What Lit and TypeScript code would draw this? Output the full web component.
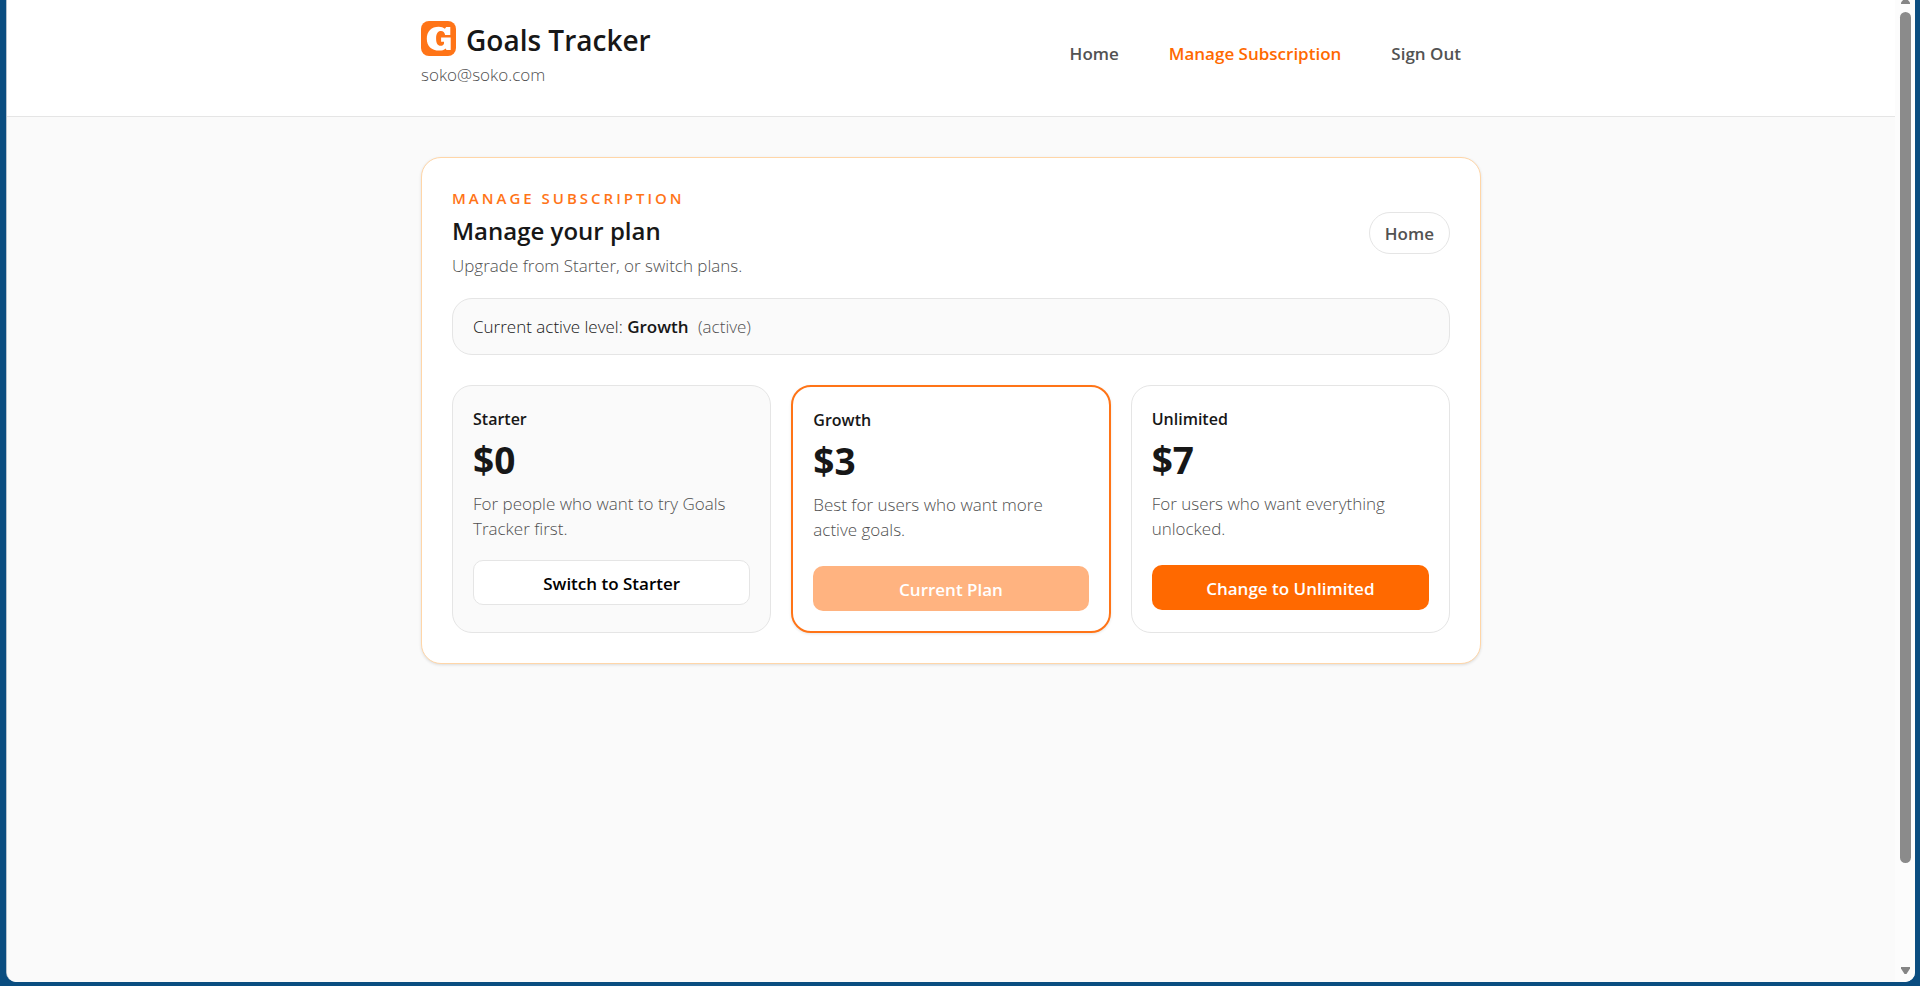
import { LitElement, html, css, svg } from "lit";
import { customElement, property } from "lit/decorators.js";
import { classMap } from "lit/directives/class-map.js";

type Tone = "muted" | "current" | "plain";

interface Plan {
  name: string;
  price: string;
  blurb: string;
  action: string;
  tone: Tone;
}

const plans: Plan[] = [
  {
    name: "Starter",
    price: "$0",
    blurb: "For people who want to try Goals Tracker first.",
    action: "Switch to Starter",
    tone: "muted",
  },
  {
    name: "Growth",
    price: "$3",
    blurb: "Best for users who want more active goals.",
    action: "Current Plan",
    tone: "current",
  },
  {
    name: "Unlimited",
    price: "$7",
    blurb: "For users who want everything unlocked.",
    action: "Change to Unlimited",
    tone: "plain",
  },
];

const logo = svg`
  <svg class="logo" viewBox="0 0 35 35" aria-hidden="true">
    <rect width="35" height="35" rx="8" fill="#ff7417" />
    <path
      fill="#fff"
      d="M29.300 6v8h-5.200c-.5-2.600-1.900-3.900-4.100-3.900-3.200 0-4.900 2.600-4.900 7.400 0 4.900 1.600 7.300 4.500 7.300
         1.800 0 3-.8 3.400-2.400v-1.700h-2.900v-4.200h9.600v12.400h-4.200l-.9-1.500c-1.600 1.500-3.700 2.200-6.300 2.200
         C10.500 29.600 5.800 25 5.800 17.700 5.800 10.400 10.500 5.700 17.700 5.700c2.600 0 4.700.7 6.200 2.100L25.200 6z"
    />
  </svg>
`;

@customElement("plan-card")
export class PlanCard extends LitElement {
  @property({ attribute: false }) plan!: Plan;

  static styles = css`
    :host {
      display: flex;
    }
    .card {
      box-sizing: border-box;
      flex: 1;
      padding: 20px;
      border: 1px solid #e5e5e5;
      border-radius: 20px;
      background: #fff;
      color: #171717;
    }
    .card.muted {
      background: #fafafa;
    }
    .card.current {
      border: 2px solid #ff7417;
      box-shadow: 0 1px 3px rgba(0, 0, 0, 0.1);
    }
    .name {
      margin: 0;
      font-size: 16px;
      line-height: 26px;
      font-weight: 600;
    }
    .price {
      margin: 5px 0 8px;
      font-size: 37px;
      line-height: 46px;
      font-weight: 700;
    }
    .blurb {
      margin: 0;
      font-size: 17px;
      line-height: 25px;
      font-weight: 300;
      color: #505050;
    }
    .action {
      box-sizing: border-box;
      display: block;
      width: 100%;
      height: 45px;
      margin-top: 24px;
      padding: 2px 16px 0;
      border: 0;
      border-radius: 10px;
      background: #ff6900;
      color: #fff;
      font: inherit;
      font-size: 17px;
      font-weight: 600;
    }
    .muted .action {
      margin-top: 19px;
      border: 1px solid #e5e5e5;
      background: #fff;
      color: #000;
    }
    .current .action {
      background: #ffb380;
    }
  `;

  render() {
    const { name, price, blurb, action, tone } = this.plan;
    return html`
      <article class=${classMap({ card: true, [tone]: true })}>
        <h2 class="name">${name}</h2>
        <p class="price">${price}</p>
        <p class="blurb">${blurb}</p>
        <button class="action" type="button" ?disabled=${tone === "current"}>${action}</button>
      </article>
    `;
  }
}

@customElement("app-root")
export class AppRoot extends LitElement {
  static styles = css`
    :host {
      box-sizing: border-box;
      display: flex;
      min-height: 100vh;
      padding: 0 5px 4px 6px;
      background: #0a4d80;
      color: #171717;
      font-family: "Open Sans", "Noto Sans", sans-serif;
      font-size: 17px;
      line-height: 25px;
    }
    .window {
      flex: 1;
      display: flex;
      overflow: hidden;
      border-left: 1px solid #b5c2cf;
      border-radius: 0 0 10px 10px;
      background: #fff;
    }
    .page {
      flex: 1;
      background: #fafafa;
    }
    .header {
      border-bottom: 1px solid #e5e5e5;
      background: #fff;
    }
    .inner {
      box-sizing: border-box;
      max-width: 1060px;
      margin: 0 auto;
    }
    .bar {
      display: flex;
      align-items: center;
      justify-content: space-between;
      padding: 20px 0 29px;
    }
    .brand {
      display: flex;
      align-items: center;
      gap: 10px;
      height: 40px;
    }
    .logo {
      width: 35px;
      height: 35px;
      margin-bottom: 4px;
    }
    .title {
      margin: 0;
      font-size: 28px;
      line-height: 40px;
      font-weight: 600;
    }
    .email {
      margin: 2px 0 0;
      color: #505050;
      font-weight: 300;
    }
    .nav {
      display: flex;
      gap: 10px;
    }
    .link {
      padding: 10px 20px;
      color: #525252;
      font-weight: 600;
      text-decoration: none;
    }
    .link.active {
      color: #ff6900;
    }
    .panel {
      margin-top: 40px;
      padding: 30px;
      border: 1px solid #ffd6a8;
      border-radius: 20px;
      background: #fff;
      box-shadow: 0 1px 3px rgba(0, 0, 0, 0.12);
    }
    .intro {
      display: flex;
      align-items: center;
      justify-content: space-between;
    }
    .eyebrow {
      margin: 0;
      color: #ff7417;
      font-size: 15px;
      line-height: 20px;
      font-weight: 600;
      letter-spacing: 3px;
      text-transform: uppercase;
    }
    .heading {
      margin: 5px 0 4px;
      font-size: 24px;
      line-height: 36px;
      font-weight: 600;
    }
    .sub {
      margin: 0;
      color: #505050;
      font-weight: 300;
    }
    .home {
      padding: 8px 15px 7px;
      border: 1px solid #e5e5e5;
      border-radius: 21px;
      color: #525252;
      font-weight: 600;
      text-decoration: none;
    }
    .status {
      margin: 20px 0 30px;
      padding: 15px 20px;
      border: 1px solid #e5e5e5;
      border-radius: 20px;
      background: #fafafa;
      color: #171717;
      font-weight: 300;
    }
    .level {
      font-weight: 600;
    }
    .state {
      margin-left: 5px;
      color: #505050;
    }
    .plans {
      display: grid;
      grid-template-columns: repeat(3, 1fr);
      gap: 20px;
    }
    .scrollbar {
      display: flex;
      flex-direction: column;
      align-items: center;
      width: 20px;
      height: calc(100vh - 4px);
      background: #fcfcfc;
    }
    .arrow {
      width: 9px;
      height: 7px;
      fill: #858585;
    }
    .arrow.up {
      margin-top: -3px;
    }
    .arrow.down {
      margin-bottom: 8px;
    }
    .track {
      flex: 1;
      width: 11px;
      margin: 8px 0 10px;
    }
    .thumb {
      height: 90%;
      border-radius: 6px;
      background: #8b8b8b;
    }
  `;

  render() {
    return html`
      <div class="window">
        <div class="page">
          <header class="header">
            <div class="inner bar">
              <div>
                <div class="brand">
                  ${logo}
                  <h1 class="title">Goals Tracker</h1>
                </div>
                <p class="email">soko@soko.com</p>
              </div>
              <nav class="nav">
                <a class="link" href="#home">Home</a>
                <a class="link active" href="#subscription" aria-current="page">Manage Subscription</a>
                <a class="link" href="#sign-out">Sign Out</a>
              </nav>
            </div>
          </header>
          <main class="inner panel">
            <div class="intro">
              <div>
                <p class="eyebrow">Manage Subscription</p>
                <h2 class="heading">Manage your plan</h2>
                <p class="sub">Upgrade from Starter, or switch plans.</p>
              </div>
              <a class="home" href="#home">Home</a>
            </div>
            <div class="status">
              Current active level: <span class="level">Growth</span>
              <span class="state">(active)</span>
            </div>
            <div class="plans">${plans.map((plan) => html`<plan-card .plan=${plan}></plan-card>`)}</div>
          </main>
        </div>
        <div class="scrollbar" aria-hidden="true">
          <svg class="arrow up" viewBox="0 0 9 7"><path d="M4.500 0 9 5.500V7H0V5.500z" /></svg>
          <div class="track"><div class="thumb"></div></div>
          <svg class="arrow down" viewBox="0 0 9 7"><path d="M0 0h9v1.500L5.500 7h-2L0 1.500z" /></svg>
        </div>
      </div>
    `;
  }
}
